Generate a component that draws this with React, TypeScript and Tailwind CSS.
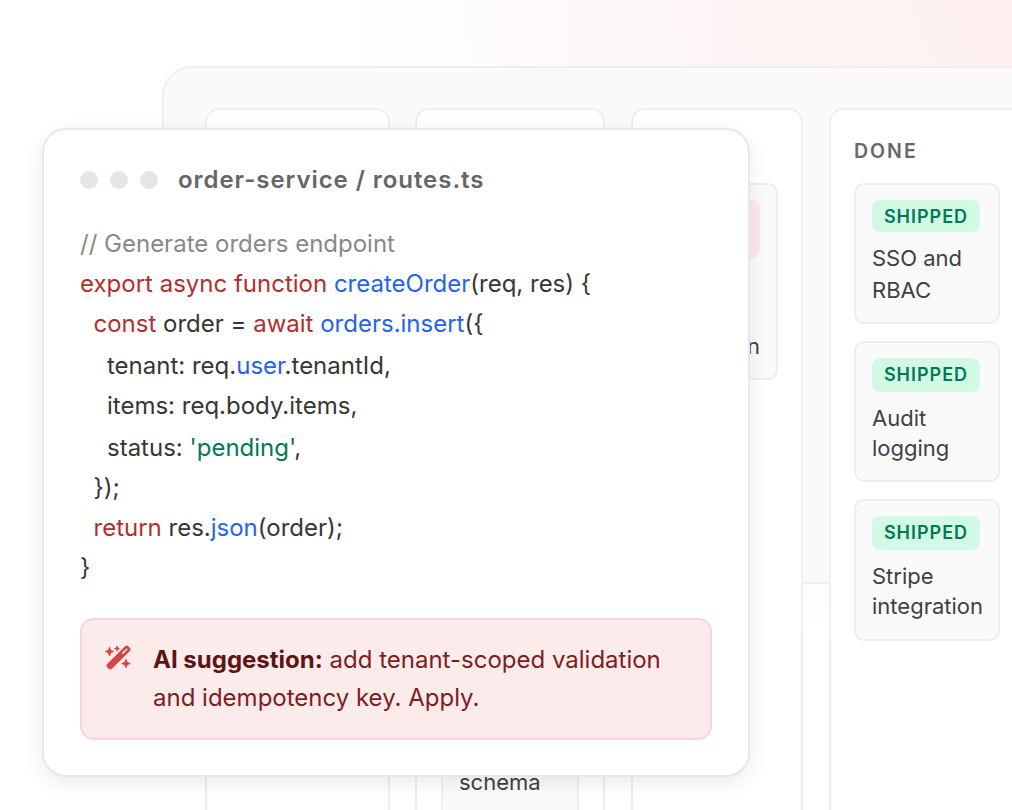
import { FaWandMagicSparkles } from 'react-icons/fa6'

const font = { fontFamily: 'Inter, sans-serif' }

const R = ({ children }: { children: string }) => <span className="text-[#b42e2e]">{children}</span>
const B = ({ children }: { children: string }) => <span className="text-[#2563eb]">{children}</span>

function DoneCard({ lines, tall, height }: { lines: [string, string]; tall?: boolean; height: string }) {
  return (
    <div className={`${height} rounded-[10px] border-2 border-[#eeeeee] bg-[#fafafa] px-[16px] pt-[15px]`}>
      <div className={`flex w-[108px] items-center justify-center rounded-[8px] bg-[#d1fae5] text-[18px] font-semibold tracking-[1px] text-[#047857] ${tall ? 'h-[34px] pb-[1px]' : 'h-[32px]'}`}>SHIPPED</div>
      <div className={`text-[22px] text-[#3f3f46] ${tall ? 'mt-[11px] leading-[30px]' : 'mt-[10px] leading-[32px]'}`}>
        {lines[0]}
        <br />
        {lines[1]}
      </div>
    </div>
  )
}

export default function App() {
  return (
    <div style={font} className="relative h-[810px] w-[1012px] overflow-hidden bg-white bg-[radial-gradient(circle_at_100%_0%,#fff0f0_0%,#fdf5f5_22%,#ffffff_52%)]">
      {/* board */}
      <div className="absolute top-[66px] left-[162px] flex h-[518px] w-[900px] rounded-[30px] border-2 border-[#eeeeee] bg-[#fafafa] pt-[40px] pl-[41px]">
        <div className="mr-[25px] h-[800px] w-[185px] shrink-0 rounded-[14px] border-2 border-[#eeeeee] bg-white" />
        <div className="mr-[26px] h-[800px] w-[190px] shrink-0 rounded-[14px] border-2 border-[#eeeeee] bg-white px-[24px] pt-[73px]">
          <div className="h-[700px] w-[138px] rounded-[10px] border-2 border-[#eeeeee] bg-[#fafafa] px-[16px] pt-[582px] text-[22px] leading-[30px] text-[#3f3f46]">schema</div>
        </div>
        <div className="mr-[26px] h-[800px] w-[172px] shrink-0 rounded-[14px] border-2 border-[#eeeeee] bg-white px-[23px] pt-[73px]">
          <div className="flex h-[197px] w-[122px] flex-col items-end rounded-[10px] border-2 border-[#eeeeee] bg-[#fafafa] pt-[15px] pr-[16px]">
            <div className="h-[58px] w-[88px] rounded-[8px] bg-[#fce8e8]" />
            <div className="mt-[73px] text-[22px] leading-[30px] text-[#3f3f46]">n</div>
          </div>
        </div>
        <div className="h-[800px] w-[240px] shrink-0 rounded-[14px] border-2 border-[#eeeeee] bg-white px-[23px] pt-[27px]">
          <div className="text-[19.5px] leading-[28px] font-semibold tracking-[2px] text-[#666666]">DONE</div>
          <div className="mt-[18px] flex w-[146px] flex-col">
            <DoneCard lines={['SSO and', 'RBAC']} height="h-[141px]" />
            <div className="mt-[17px]">
              <DoneCard lines={['Audit', 'logging']} tall height="h-[141px]" />
            </div>
            <div className="mt-[17px]">
              <DoneCard lines={['Stripe', 'integration']} tall height="h-[142px]" />
            </div>
          </div>
        </div>
      </div>

      {/* code window */}
      <div className="absolute top-[128px] left-[42px] flex h-[649px] w-[708px] flex-col rounded-[24px] border-2 border-[#e8e8e8] bg-white px-[36px] pt-[35px] shadow-[0_6px_20px_rgba(0,0,0,0.08)]">
        <div className="flex h-[30px] items-center">
          <div className="flex gap-[12px]">
            <span className="size-[18px] rounded-full bg-[#e5e5e5]" />
            <span className="size-[18px] rounded-full bg-[#e5e5e5]" />
            <span className="size-[18px] rounded-full bg-[#e5e5e5]" />
          </div>
          <div className="ml-[20px] text-[24px] font-semibold tracking-[0.95px] text-[#666666]">order-service / routes.ts</div>
        </div>
        <pre style={font} className="mt-[29px] text-[24px] leading-[40px] text-[#363636]">
          <div className="text-[#888888]">// Generate orders endpoint</div>
          <div><R>export async function</R> <B>createOrder</B>(req, res) {'{'}</div>
          <div>  <R>const</R> order = <R>await</R> <B>orders.insert</B>({'{'}</div>
          <div className="mt-[2px]">    tenant: req.<B>user</B>.tenantId,</div>
          <div>    items: req.body.items,</div>
          <div className="mt-[2px]">    status: <span className="text-[#047857]">'pending'</span>,</div>
          <div>  {'}'});</div>
          <div>  <R>return</R> res.<B>json</B>(order);</div>
          <div>{'}'}</div>
        </pre>
        <div className="mt-[30px] flex h-[122px] gap-[21px] rounded-[14px] border-2 border-[#f9d5d5] bg-[#fcebeb] pt-[21px] pl-[23px]">
          <FaWandMagicSparkles className="mt-[3px] shrink-0 text-[#d64545]" size={27} />
          <div className="text-[24px] leading-[38px] text-[#7f1d1d]"><b className="font-bold text-[#5f1414]">AI suggestion:</b> add tenant-scoped validation<br />and idempotency key. Apply.</div>
        </div>
      </div>
    </div>
  )
}
